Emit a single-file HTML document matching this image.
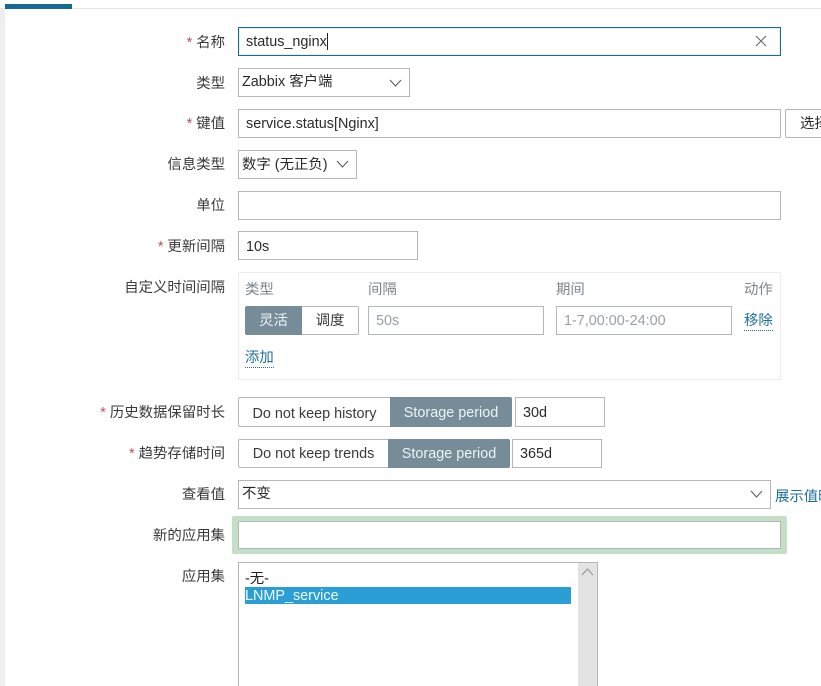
<!DOCTYPE html>
<html><head><meta charset="utf-8">
<style>
html,body{margin:0;padding:0;width:821px;height:686px;overflow:hidden}
body{background:#fff;font-family:"Liberation Sans","Noto Sans CJK SC",sans-serif;font-size:14.4px;color:#1f2c33}
#w{position:absolute;left:0;top:0;width:821px;height:686px;overflow:hidden}
.a,.l,.i,.t{position:absolute;box-sizing:border-box}
.l{right:596px;text-align:right;white-space:nowrap;height:20px;line-height:22px;color:#3a3a3a}
.l b{color:#c0505a;font-weight:normal;margin-right:4px}
.i{border:1px solid #b3b7ba;background:#fff;height:29px;line-height:29px;padding-left:7px;color:#2b2b2b;white-space:nowrap}
.s{padding-left:3px}
.t{white-space:nowrap;line-height:22px;height:20px}
.g{color:#7b868c}
.lk{color:#1f6f9c}
.u{border-bottom:1px dotted #1f6f9c;height:20px;line-height:21px}
.on{background:#768d99;color:#eef2f4;text-align:center;white-space:nowrap}
.off{background:#fff;color:#3a3a3a;text-align:center;white-space:nowrap}
svg{position:absolute}
</style></head><body><div id="w">
<div class="a" style="left:0;top:8px;width:821px;height:1px;background:#e6e6e6"></div>
<div class="a" style="left:5px;top:4px;width:67px;height:5px;background:#17689a"></div>
<div class="a" style="left:0;top:9px;width:5px;height:677px;background:#efefef"></div>

<div class="l" style="top:32px"><b>*</b>名称</div>
<div class="i" style="left:238px;top:27px;width:543px;border-color:#1c6a8c;box-shadow:inset 0 0 0 1px #dff3f8">status_nginx</div>
<div class="a" style="left:327px;top:33px;width:1px;height:17px;background:#222"></div>
<svg style="left:755px;top:35px" width="12" height="12" viewBox="0 0 12 12"><path d="M1 1L11 11M11 1L1 11" stroke="#666" stroke-width="1.1" fill="none"/></svg>

<div class="l" style="top:73px">类型</div>
<div class="i s" style="left:238px;top:68px;width:172px;line-height:27px">Zabbix 客户端</div>
<svg style="left:389px;top:79px" width="13" height="8" viewBox="0 0 13 8"><path d="M1 1L6.500 7L12 1" stroke="#555" stroke-width="1" fill="none"/></svg>

<div class="l" style="top:113px"><b>*</b>键值</div>
<div class="i" style="left:238px;top:109px;width:543px">service.status[Nginx]</div>
<div class="i" style="left:785px;top:109px;width:50px;border-radius:2px;padding-left:14px">选择</div>

<div class="l" style="top:154px">信息类型</div>
<div class="i s" style="left:238px;top:150px;width:119px">数字 (无正负)</div>
<svg style="left:336px;top:160px" width="13" height="8" viewBox="0 0 13 8"><path d="M1 1L6.500 7L12 1" stroke="#555" stroke-width="1" fill="none"/></svg>

<div class="l" style="top:195px">单位</div>
<div class="i" style="left:238px;top:191px;width:543px"></div>

<div class="l" style="top:236px"><b>*</b>更新间隔</div>
<div class="i" style="left:238px;top:231px;width:180px;line-height:31px">10s</div>

<div class="l" style="top:277px">自定义时间间隔</div>
<div class="a" style="left:238px;top:272px;width:543px;height:108px;border:1px solid #ececec"></div>
<div class="t g" style="left:245px;top:279px">类型</div>
<div class="t g" style="left:368px;top:279px">间隔</div>
<div class="t g" style="left:556px;top:279px">期间</div>
<div class="t g" style="left:744px;top:279px">动作</div>
<div class="a on" style="left:245px;top:306px;width:57px;height:29px;line-height:30px;border-radius:2px 0 0 2px">灵活</div>
<div class="a off" style="left:302px;top:306px;width:57px;height:29px;line-height:29px;border:1px solid #b3b7ba;border-left:0;border-radius:0 2px 2px 0">调度</div>
<div class="i" style="left:368px;top:306px;width:176px;color:#9aa0a4">50s</div>
<div class="i" style="left:556px;top:306px;width:176px;color:#9aa0a4">1-7,00:00-24:00</div>
<div class="t lk u" style="left:744px;top:311px">移除</div>
<div class="t lk u" style="left:245px;top:348px">添加</div>

<div class="l" style="top:402px"><b>*</b>历史数据保留时长</div>
<div class="a off" style="left:238px;top:397px;width:152px;height:30px;line-height:32px;border:1px solid #b3b7ba;border-right:0;border-radius:2px 0 0 2px">Do not keep history</div>
<div class="a on" style="left:390px;top:397px;width:122px;height:30px;line-height:33px;border-radius:0 2px 2px 0">Storage period</div>
<div class="i" style="left:515px;top:397px;width:90px;height:30px;line-height:30px">30d</div>

<div class="l" style="top:443px"><b>*</b>趋势存储时间</div>
<div class="a off" style="left:238px;top:439px;width:150px;height:29px;line-height:29px;border:1px solid #b3b7ba;border-right:0;border-radius:2px 0 0 2px">Do not keep trends</div>
<div class="a on" style="left:388px;top:439px;width:122px;height:29px;line-height:30px;border-radius:0 2px 2px 0">Storage period</div>
<div class="i" style="left:512px;top:439px;width:90px">365d</div>

<div class="l" style="top:484px">查看值</div>
<div class="i s" style="left:238px;top:480px;width:533px;line-height:27px">不变</div>
<svg style="left:750px;top:490px" width="13" height="8" viewBox="0 0 13 8"><path d="M1 1L6.500 7L12 1" stroke="#555" stroke-width="1" fill="none"/></svg>
<div class="t lk" style="left:775px;top:486px">展示值映射</div>

<div class="l" style="top:525px">新的应用集</div>
<div class="a" style="left:232px;top:516px;width:555px;height:38px;background:#c5dfc6;border-radius:2px"></div>
<div class="i" style="left:238px;top:521px;width:543px;height:28px"></div>

<div class="l" style="top:566px">应用集</div>
<div class="a" style="left:238px;top:562px;width:360px;height:124px;border:1px solid #b3b7ba;border-bottom:0;background:#fff"></div>
<div class="a" style="left:578px;top:563px;width:19px;height:123px;background:#e3e3e3"></div>
<svg style="left:581px;top:568px" width="13" height="8" viewBox="0 0 13 8"><path d="M1 7L6.500 1L12 7" stroke="#999" stroke-width="1.200" fill="none"/></svg>
<div class="t" style="left:245px;top:568px;color:#222">-无-</div>
<div class="a" style="left:245px;top:587px;width:326px;height:17px;background:#2a9fd6;color:#f4fbfe;line-height:18px;white-space:nowrap">LNMP_service</div>
</div></body></html>
